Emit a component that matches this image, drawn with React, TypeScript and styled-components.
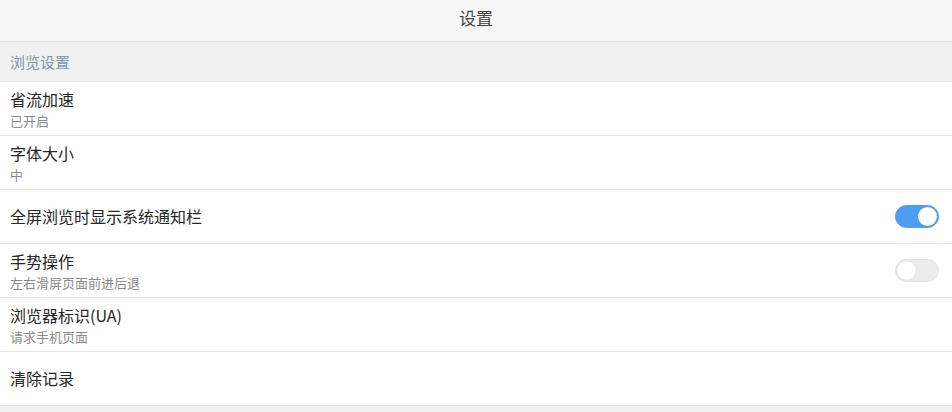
import React, { useState } from "react";
import styled, { createGlobalStyle } from "styled-components";

const GlobalStyle = createGlobalStyle`
  html, body {
    margin: 0;
    padding: 0;
    background: #f0f0f0;
    font-family: "Noto Sans CJK SC", "Noto Sans", sans-serif;
  }
`;

const Page = styled.div`
  width: 952px;
  min-height: 412px;
  background: #f0f0f0;
`;

const Header = styled.div`
  height: 42px;
  box-sizing: border-box;
  padding-bottom: 6px;
  background: #f7f7f7;
  border-bottom: 1px solid #e2e2e2;
  display: flex;
  align-items: center;
  justify-content: center;
  font-size: 17px;
  color: #444;
`;

const SectionTitle = styled.div`
  height: 39px;
  padding: 0 10px;
  display: flex;
  align-items: center;
  font-size: 15px;
  color: #8693a6;
  border-bottom: 1px solid #e6e6e6;
`;

const List = styled.div`
  background: #fff;
`;

const Row = styled.div`
  min-height: 54px;
  box-sizing: border-box;
  padding: 0 13px 0 10px;
  display: flex;
  align-items: center;
  justify-content: space-between;
  border-bottom: 1px solid #e6e6e6;
`;

const Texts = styled.div`
  display: flex;
  flex-direction: column;
`;

const Title = styled.div`
  font-size: 16px;
  line-height: 23px;
  color: #262626;
`;

const Sub = styled.div`
  font-size: 13px;
  line-height: 19px;
  color: #8a8a8a;
`;

const Track = styled.button<{ $on: boolean }>`
  width: 44px;
  height: 23px;
  border-radius: 12px;
  border: 1px solid ${(p) => (p.$on ? "#4d9ef3" : "#e4e4e4")};
  background: ${(p) => (p.$on ? "#4d9ef3" : "#ececec")};
  padding: 0;
  position: relative;
  cursor: pointer;
`;

const Knob = styled.span<{ $on: boolean }>`
  position: absolute;
  top: 1px;
  left: ${(p) => (p.$on ? "22px" : "1px")};
  width: 19px;
  height: 19px;
  border-radius: 50%;
  background: #fff;
  box-shadow: 0 0 1px rgba(0, 0, 0, 0.2);
`;

const Toggle = ({ on, onClick }: { on: boolean; onClick: () => void }) => (
  <Track $on={on} onClick={onClick}>
    <Knob $on={on} />
  </Track>
);

export default function App() {
  const [notify, setNotify] = useState(true);
  const [gesture, setGesture] = useState(false);

  return (
    <Page>
      <GlobalStyle />
      <Header>设置</Header>
      <SectionTitle>浏览设置</SectionTitle>
      <List>
        <Row>
          <Texts>
            <Title>省流加速</Title>
            <Sub>已开启</Sub>
          </Texts>
        </Row>
        <Row>
          <Texts>
            <Title>字体大小</Title>
            <Sub>中</Sub>
          </Texts>
        </Row>
        <Row>
          <Texts>
            <Title>全屏浏览时显示系统通知栏</Title>
          </Texts>
          <Toggle on={notify} onClick={() => setNotify(!notify)} />
        </Row>
        <Row>
          <Texts>
            <Title>手势操作</Title>
            <Sub>左右滑屏页面前进后退</Sub>
          </Texts>
          <Toggle on={gesture} onClick={() => setGesture(!gesture)} />
        </Row>
        <Row>
          <Texts>
            <Title>浏览器标识(UA)</Title>
            <Sub>请求手机页面</Sub>
          </Texts>
        </Row>
        <Row>
          <Texts>
            <Title>清除记录</Title>
          </Texts>
        </Row>
      </List>
    </Page>
  );
}
